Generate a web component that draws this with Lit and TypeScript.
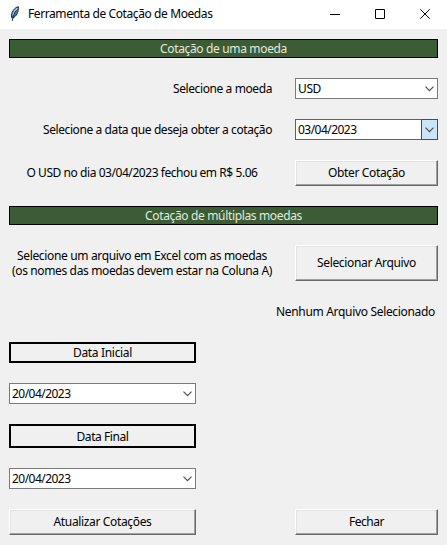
import { LitElement, html, css, svg } from "lit";
import { customElement, property } from "lit/decorators.js";
import { classMap } from "lit/directives/class-map.js";
import { styleMap } from "lit/directives/style-map.js";

const FONT = '"Noto Sans", "Open Sans", sans-serif';
const pen = document.createElement("canvas").getContext("2d")!;

/** A single line of text, tracked so that it fills the given width. */
@customElement("ui-text")
class UiText extends LitElement {
  @property() text = "";
  @property({ type: Number }) width = 0;

  static styles = css`
    :host { display: block; flex: none; }
    .line { display: block; height: 15px; white-space: pre; line-height: 15px; }
  `;

  render() {
    pen.font = `12px ${FONT}`;
    const n = this.text.length;
    const spacing = (this.width - pen.measureText(this.text).width) / n;
    return html`<span class="line" style=${styleMap({
      width: `${this.width}px`,
      letterSpacing: `${spacing.toFixed(3)}px`,
    })}>${this.text}</span>`;
  }
}

@customElement("ui-combo")
class UiCombo extends LitElement {
  @property() value = "";
  @property({ type: Number }) width = 0;
  @property({ type: Boolean }) active = false;

  static styles = css`
    :host { display: block; }
    .box { box-sizing: border-box; height: 21px; display: flex; align-items: stretch; justify-content: space-between;
      background: #fff; border: 1px solid #7a7a7a; }
    .value { padding: 2px 0 0 2px; }
    .arrow { box-sizing: border-box; width: 17px; margin: -1px; border: 1px solid transparent; display: flex; align-items: center; justify-content: center; }
    .active { border-color: #1f73b0; }
    .active .arrow { background: #cce4f7; border-color: #145a94; }
    svg { display: block; }
    path { fill: none; stroke: #505050; stroke-width: 1.2; }
  `;

  render() {
    return html`<div class=${classMap({ box: true, active: this.active })}>
      <ui-text class="value" text=${this.value} width=${this.width}></ui-text>
      <div class="arrow"><svg width="9" height="6" viewBox="0 0 9 6"><path d="M0.5 0.7 L4.5 4.7 L8.5 0.7"/></svg></div>
    </div>`;
  }
}

@customElement("ui-button")
class UiButton extends LitElement {
  @property() text = "";
  @property({ type: Number }) width = 0;

  static styles = css`
    :host { display: block; }
    .face { box-sizing: border-box; width: 100%; height: 100%; display: flex; align-items: center; justify-content: center;
      padding: 0 0 1px; background: #f0f0f0; border: 1px solid; border-color: #fff #696969 #696969 #fff;
      box-shadow: inset -1px -1px #a0a0a0, inset 1px 1px #e3e3e3; }
  `;

  render() {
    return html`<div class="face"><ui-text text=${this.text} width=${this.width}></ui-text></div>`;
  }
}

const feather = svg`
  <path d="M9.3 0.7 C6 1.4 2.8 5 2.5 9.2 L2.6 11.6 L4 12 C7.2 10.4 10 6 9.3 0.7 Z" fill="#4a7cac" stroke="#1c2c40" stroke-width="1"/>
  <path d="M8.2 2.2 C6 4 4.4 6.6 3.8 9.4" fill="none" stroke="#b4d2ea" stroke-width="1.3"/>
  <path d="M7.4 4.4 C5.2 7 4 10 3.2 15" fill="none" stroke="#1a1f28" stroke-width="0.9"/>`;

@customElement("app-root")
class AppRoot extends LitElement {
  static styles = css`
    :host { display: block; width: 447px; height: 545px; overflow: hidden; background: #f0f0f0; color: #000;
      font: 12px/15px "Noto Sans", "Open Sans", sans-serif; }
    .titlebar { box-sizing: border-box; height: 29px; background: #fff; display: flex; align-items: center; padding: 0 17px 2px 9px; }
    .feather { margin-right: 7px; }
    .controls { margin-left: auto; display: flex; gap: 35px; }
    .controls path { fill: none; stroke: #000; stroke-width: 1; }
    svg { display: block; flex: none; }
    .form { display: grid; padding: 10px 9px; gap: 20px; grid-template-columns: 187px 59px 143px;
      grid-template-rows: 19px 21px 21px 26px 19px 36px 21px 21px 21px 24px 21px 26px; }
    .heading { grid-column: 1 / 4; box-sizing: border-box; border: 1px solid #000; background: #3c5c35; color: #e2eade;
      display: flex; align-items: center; justify-content: center; }
    .label { grid-column: 1 / 3; display: flex; flex-direction: column; align-items: center; justify-content: center; }
    .right { align-items: flex-end; padding-right: 3px; }
    .result { padding-bottom: 2px; }
    .wide { grid-column: 2 / 4; }
    .left { grid-column: 1; }
    .side { grid-column: 3; }
    .framed { grid-column: 1; box-sizing: border-box; border: 2px solid #000; display: flex; align-items: center; justify-content: center; }
  `;

  render() {
    return html`
      <div class="titlebar">
        <svg class="feather" width="12" height="16" viewBox="0 0 12 16">${feather}</svg>
        <ui-text text="Ferramenta de Cotação de Moedas" width="184.5"></ui-text>
        <div class="controls">
          <svg width="10" height="10"><path d="M0 5.5H10"/></svg>
          <svg width="10" height="10"><path d="M.5 .5H9.5V9.5H.5Z"/></svg>
          <svg width="10" height="10"><path d="M.3 .3L9.7 9.7M9.7 .3L.3 9.7"/></svg>
        </div>
      </div>
      <div class="form">
        <div class="heading"><ui-text text="Cotação de uma moeda" width="127"></ui-text></div>

        <div class="label right"><ui-text text="Selecione a moeda" width="99"></ui-text></div>
        <ui-combo class="side" value="USD" width="23"></ui-combo>

        <div class="label right"><ui-text text="Selecione a data que deseja obter a cotação" width="229"></ui-text></div>
        <ui-combo class="side" value="03/04/2023" width="58.5" active></ui-combo>

        <div class="label result"><ui-text text="O USD no dia 03/04/2023 fechou em R$ 5.06" width="231"></ui-text></div>
        <ui-button class="side" text="Obter Cotação" width="77"></ui-button>

        <div class="heading"><ui-text text="Cotação de múltiplas moedas" width="157"></ui-text></div>

        <div class="label">
          <ui-text text="Selecione um arquivo em Excel com as moedas" width="250"></ui-text>
          <ui-text text="(os nomes das moedas devem estar na Coluna A)" width="260"></ui-text>
        </div>
        <ui-button class="side" text="Selecionar Arquivo" width="99"></ui-button>

        <div class="label right wide"><ui-text text="Nenhum Arquivo Selecionado" width="159"></ui-text></div>

        <div class="framed"><ui-text text="Data Inicial" width="59"></ui-text></div>
        <ui-combo class="left" value="20/04/2023" width="58.5"></ui-combo>
        <div class="framed"><ui-text text="Data Final" width="52"></ui-text></div>
        <ui-combo class="left" value="20/04/2023" width="58.5"></ui-combo>

        <ui-button class="left" text="Atualizar Cotações" width="98"></ui-button>
        <ui-button class="side" text="Fechar" width="35"></ui-button>
      </div>
    `;
  }
}
